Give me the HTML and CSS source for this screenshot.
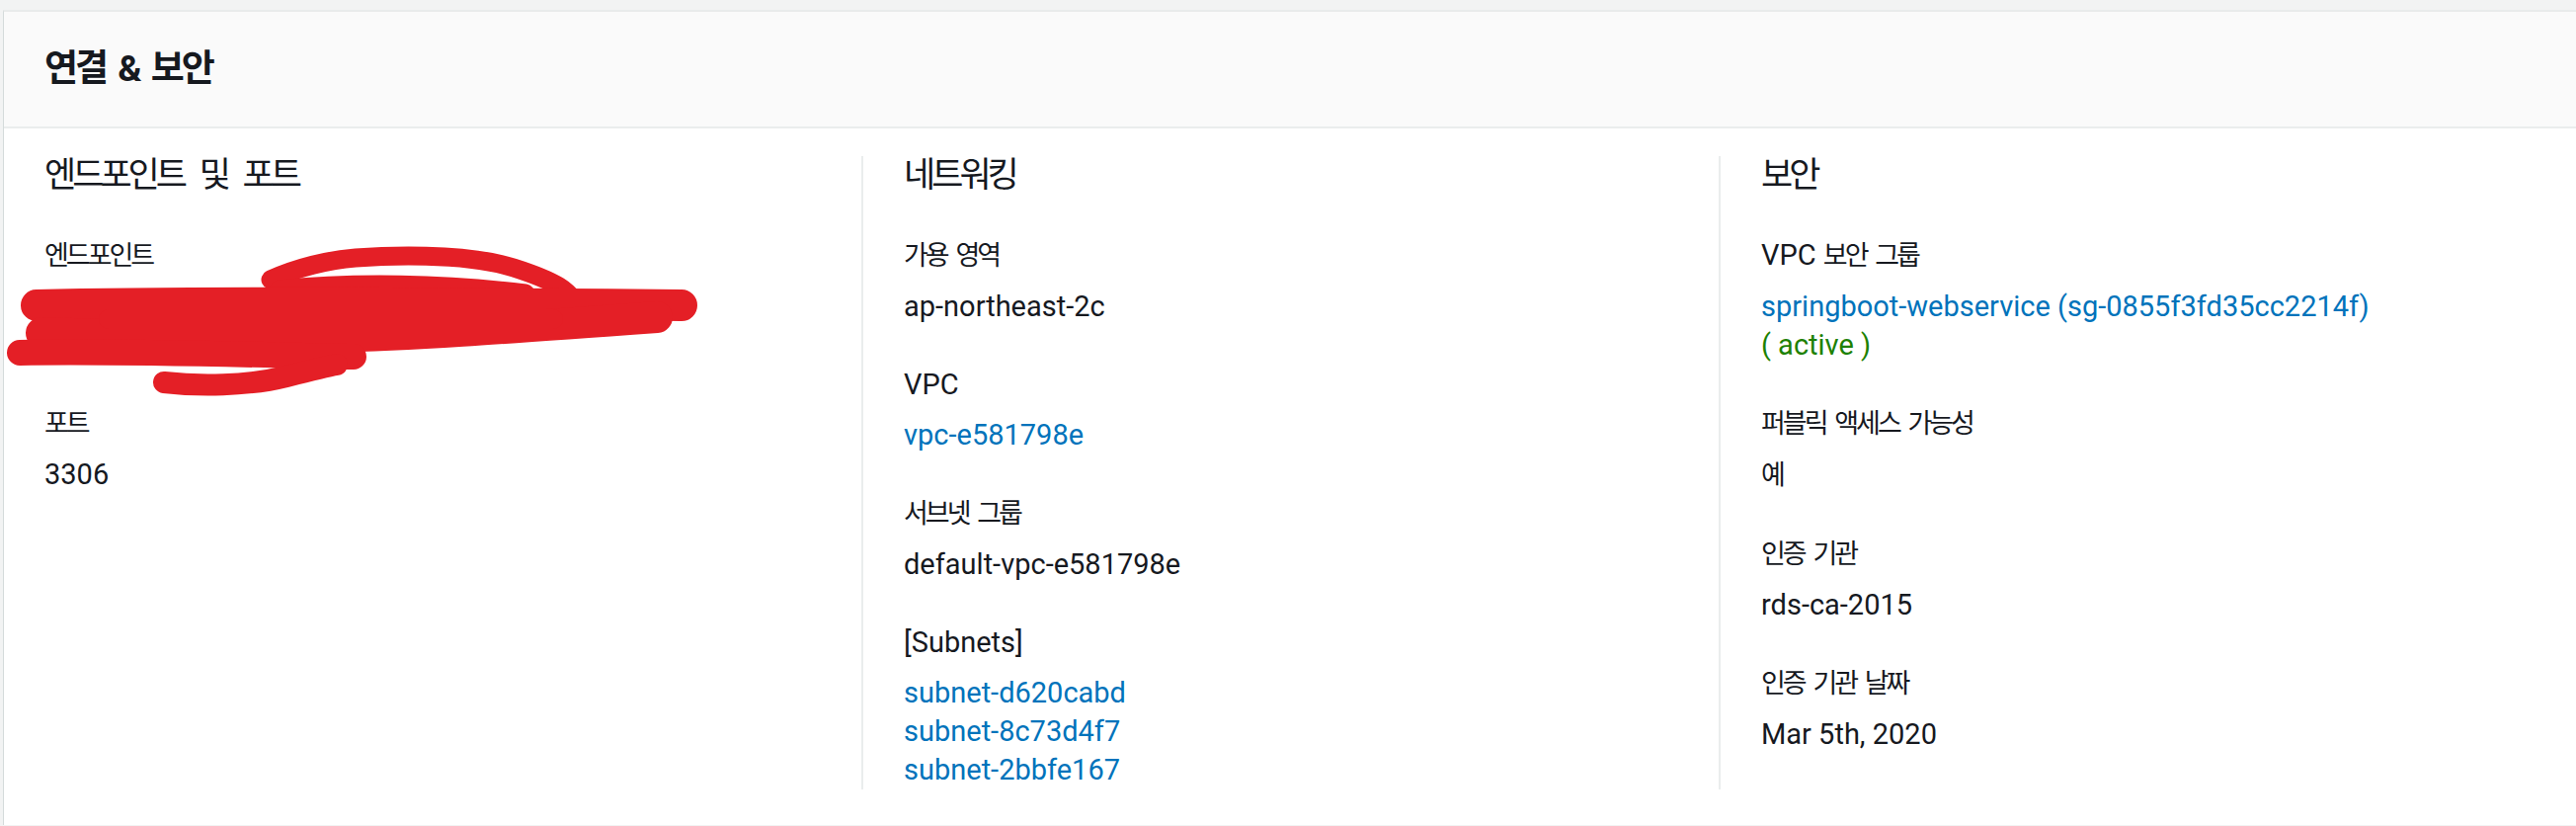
FILE: index.html
```html
<!DOCTYPE html>
<html lang="ko">
<head>
<meta charset="utf-8">
<title>연결 &amp; 보안</title>
<link rel="stylesheet" href="styles.css">
</head>
<body>
<div class="panel">
  <div class="panel-header">
    <h2 class="panel-title">연결 &amp; 보안</h2>
  </div>
  <div class="panel-body">
    <div class="col">
      <h3 class="col-title">엔드포인트 및 포트</h3>
      <div class="item">
        <div class="label"><span class="ko">엔드포인트</span></div>
        <div class="value redacted">
          <svg class="scribble" viewBox="0 0 720 175" width="720" height="175" aria-hidden="true">
            <g fill="none" stroke="#e41f26" stroke-linecap="round" stroke-linejoin="round">
              <path d="M274 42 C 300 30, 333 22, 360 20 S 470 14, 520 30 S 575 55, 584 66" stroke-width="19"/>
              <path d="M283 52 C 360 44, 450 46, 532 56" stroke-width="19"/>
              <path d="M37 68 C 200 64, 450 66, 690 68" stroke-width="32"/>
              <path d="M42 96 C 150 99, 250 102, 333 100 S 500 92, 665 80" stroke-width="32"/>
              <path d="M20 116 C 120 114, 250 118, 358 120" stroke-width="26"/>
              <path d="M166 146 C 200 150, 250 150, 290 140 S 330 130, 341 128" stroke-width="22"/>
              <path d="M110 82 L 560 82" stroke-width="20"/>
            </g>
          </svg>
        </div>
      </div>
      <div class="item">
        <div class="label"><span class="ko">포트</span></div>
        <div class="value">3306</div>
      </div>
    </div>

    <div class="col">
      <h3 class="col-title">네트워킹</h3>
      <div class="item">
        <div class="label"><span class="ko">가용 영역</span></div>
        <div class="value">ap-northeast-2c</div>
      </div>
      <div class="item">
        <div class="label">VPC</div>
        <div class="value"><a class="link" href="#">vpc-e581798e</a></div>
      </div>
      <div class="item">
        <div class="label"><span class="ko">서브넷 그룹</span></div>
        <div class="value">default-vpc-e581798e</div>
      </div>
      <div class="item">
        <div class="label">[Subnets]</div>
        <div class="value">
          <a class="link block" href="#">subnet-d620cabd</a>
          <a class="link block" href="#">subnet-8c73d4f7</a>
          <a class="link block" href="#">subnet-2bbfe167</a>
        </div>
      </div>
    </div>

    <div class="col">
      <h3 class="col-title">보안</h3>
      <div class="item">
        <div class="label">VPC <span class="ko">보안 그룹</span></div>
        <div class="value">
          <a class="link block" href="#">springboot-webservice (sg-0855f3fd35cc2214f)</a>
          <span class="status">( active )</span>
        </div>
      </div>
      <div class="item">
        <div class="label"><span class="ko">퍼블릭 액세스 가능성</span></div>
        <div class="value"><span class="ko">예</span></div>
      </div>
      <div class="item">
        <div class="label"><span class="ko">인증 기관</span></div>
        <div class="value">rds-ca-2015</div>
      </div>
      <div class="item">
        <div class="label"><span class="ko">인증 기관 날짜</span></div>
        <div class="value">Mar 5th, 2020</div>
      </div>
    </div>
  </div>
</div>
</body>
</html>
```
FILE: styles.css
```css
* { box-sizing: border-box; }

html, body {
  margin: 0;
  padding: 0;
}

body {
  background: #f2f3f3;
  font-family: Roboto, "Noto Sans CJK KR", sans-serif;
  color: #16191f;
  font-size: 29px;
  line-height: 39px;
  overflow: hidden;
}

.panel {
  margin: 10px 0 0 3px;
  background: #ffffff;
  border-top: 2px solid #e9ebeb;
  border-left: 1px solid #d5dbdb;
}

.panel-header {
  height: 118px;
  background: #fafafa;
  border-bottom: 2px solid #eaeded;
  display: flex;
  align-items: center;
  padding-left: 41px;
}

.panel-title {
  margin: 0;
  font-size: 37px;
  font-weight: 700;
  letter-spacing: -3px;
  word-spacing: 6px;
  line-height: 44px;
  color: #16191f;
}

.panel-body {
  display: grid;
  grid-template-columns: repeat(3, 1fr);
  padding: 28px 0 36px;
}

.col {
  padding-left: 41px;
}

.col + .col {
  border-left: 2px solid #eaeded;
}

.col-title {
  margin: 0 0 41px;
  font-size: 35px;
  font-weight: 400;
  line-height: 40px;
  letter-spacing: -4px;
  word-spacing: 11px;
}

.item + .item {
  margin-top: 40px;
}

.label {
  line-height: 39px;
}

.value {
  margin-top: 12px;
  line-height: 39px;
}

.ko {
  font-size: 27px;
  letter-spacing: -3px;
  word-spacing: 5px;
}

.link {
  color: #0073bb;
  text-decoration: none;
}

.block {
  display: block;
}

.status {
  color: #1d8102;
}

.redacted {
  position: relative;
  height: 78px;
}

.scribble {
  position: absolute;
  left: -45px;
  top: -50px;
}
```
